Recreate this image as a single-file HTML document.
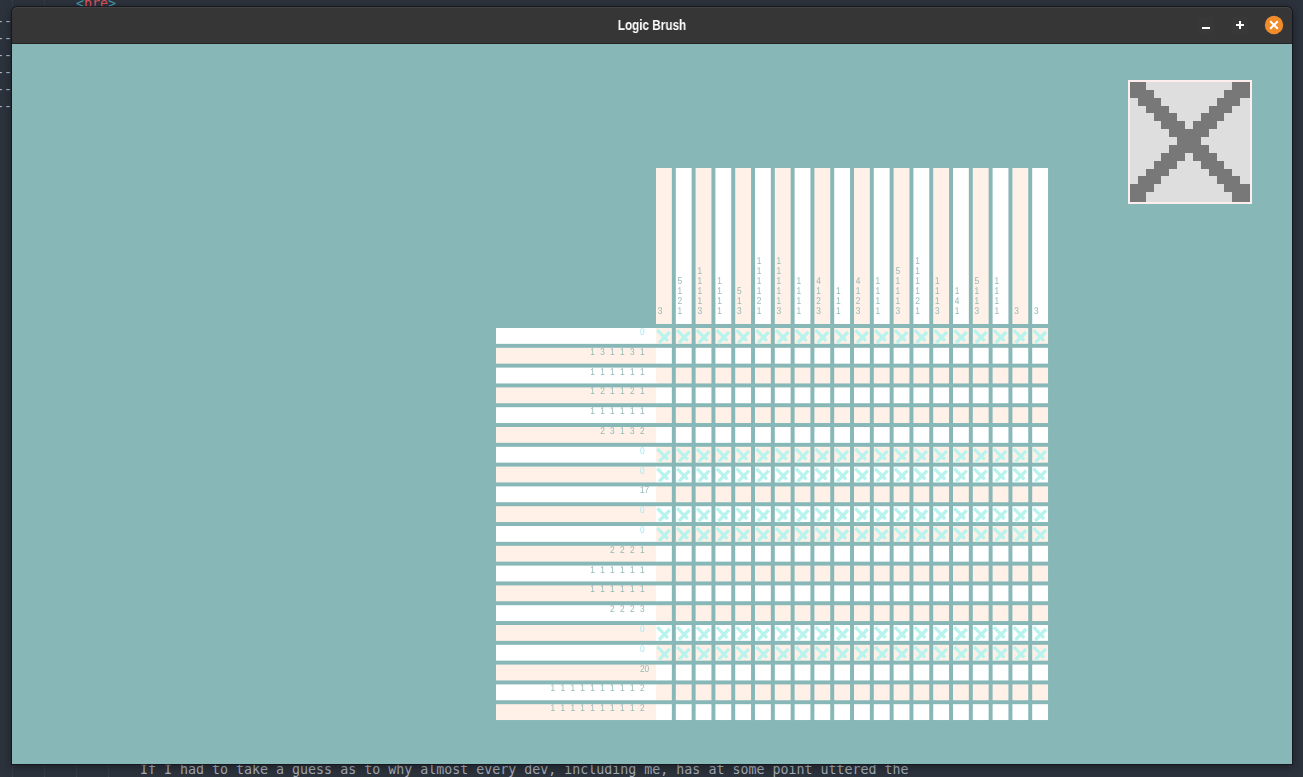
<!DOCTYPE html>
<html lang="en">
<head>
<meta charset="utf-8">
<title>Logic Brush</title>
<style>
html,body{margin:0;padding:0;}
body{width:1303px;height:777px;overflow:hidden;position:relative;background:#2d333d;font-family:"Liberation Sans",Arial,sans-serif;}
.editor{position:absolute;left:0;top:0;width:1303px;height:777px;overflow:hidden;font-family:"DejaVu Sans Mono","Liberation Mono",monospace;font-size:13.3px;color:#abb2bf;white-space:pre;}
.editor .ln{position:absolute;left:0;height:17px;line-height:17px;}
.guide{position:absolute;top:0;width:0;height:777px;border-left:1px dotted #3d4350;}
.win{position:absolute;left:12px;top:7px;width:1280px;height:757px;border-radius:5px 5px 0 0;background:#363636;box-shadow:0 0 0 1px rgba(18,20,26,.8),0 2px 11px 1px rgba(0,0,0,.4);overflow:hidden;}
.bar{position:absolute;left:0;top:0;width:1280px;height:36px;background:#363636;border-bottom:1px solid #242424;box-shadow:inset 0 1px 0 rgba(255,255,255,.07);border-radius:5px 5px 0 0;}
.title{position:absolute;left:0;top:1px;width:1280px;height:36px;line-height:36px;text-align:center;color:#fff;font-weight:bold;font-size:13.8px;transform:scaleX(.85);will-change:transform;}
.btn{position:absolute;top:0;}
.close{position:absolute;left:1253px;top:9px;width:18px;height:18px;border-radius:50%;background:#f08c2b;}
.content{position:absolute;left:0;top:37px;width:1280px;height:720px;background:#87b8b7;}
.grid{position:absolute;left:0;top:37px;will-change:transform;}
</style>
</head>
<body>
<div class="editor">
<div class="guide" style="left:12px"></div>
<div class="guide" style="left:44px"></div>
<div class="guide" style="left:76px;top:760px"></div>
<div class="guide" style="left:108px;top:760px"></div>
<div class="ln" style="left:76px;top:-5px"><span style="color:#46a5b3">&lt;</span><span style="color:#e0565f">pre</span><span style="color:#46a5b3">&gt;</span></div>
<div class="ln" style="left:-4px;top:13px;color:#b4bac6">--</div>
<div class="ln" style="left:-4px;top:30px;color:#b4bac6">--</div>
<div class="ln" style="left:-4px;top:47px;color:#b4bac6">--</div>
<div class="ln" style="left:-4px;top:64px;color:#b4bac6">--</div>
<div class="ln" style="left:-4px;top:81px;color:#b4bac6">--</div>
<div class="ln" style="left:-4px;top:98px;color:#b4bac6">--</div>
<div class="ln" style="left:140px;top:761px">If I had to take a guess as to why almost every dev, including me, has at some point uttered the</div>
</div>
<div class="win">
<div class="content"></div>
<div class="bar"></div>
<div class="title">Logic Brush</div>
<svg class="btn" style="left:0" width="1280" height="36" viewBox="0 0 1280 36">
<rect x="1186" y="10" width="16" height="16" fill="#fff" fill-opacity=".012"/><rect x="1220" y="10" width="16" height="16" fill="#fff" fill-opacity=".012"/>
<rect x="1190" y="20" width="8" height="2" fill="#fff"/>
<rect x="1224" y="17" width="8" height="2" fill="#fff"/><rect x="1227" y="14" width="2" height="8" fill="#fff"/>
<circle cx="1262" cy="18" r="9.2" fill="#f08c2b"/>
<path d="M1258.2 14.2l7.6 7.6M1265.8 14.2l-7.6 7.6" stroke="#fff" stroke-width="2" fill="none"/>
</svg>
<svg class="grid" width="1280" height="720" viewBox="12 44 1280 720">
<defs><g id="x" fill="none" stroke="#b9f3ed" stroke-width="3"><path stroke-width="3.3" d="M1.3 2.1L11.9 12.8"/><path stroke-width="3.4" d="M13.75 4.05L3.1 14.8"/><path stroke-width="1.6" d="M3.9 14.6L4.2 16.1"/></g></defs>
<rect x="656" y="168" width="15.84" height="156" fill="#fff1e8"/>
<rect x="675.8" y="168" width="15.84" height="156" fill="#ffffff"/>
<rect x="695.6" y="168" width="15.84" height="156" fill="#fff1e8"/>
<rect x="715.4" y="168" width="15.84" height="156" fill="#ffffff"/>
<rect x="735.2" y="168" width="15.84" height="156" fill="#fff1e8"/>
<rect x="755" y="168" width="15.84" height="156" fill="#ffffff"/>
<rect x="774.8" y="168" width="15.84" height="156" fill="#fff1e8"/>
<rect x="794.6" y="168" width="15.84" height="156" fill="#ffffff"/>
<rect x="814.4" y="168" width="15.84" height="156" fill="#fff1e8"/>
<rect x="834.2" y="168" width="15.84" height="156" fill="#ffffff"/>
<rect x="854" y="168" width="15.84" height="156" fill="#fff1e8"/>
<rect x="873.8" y="168" width="15.84" height="156" fill="#ffffff"/>
<rect x="893.6" y="168" width="15.84" height="156" fill="#fff1e8"/>
<rect x="913.4" y="168" width="15.84" height="156" fill="#ffffff"/>
<rect x="933.2" y="168" width="15.84" height="156" fill="#fff1e8"/>
<rect x="953" y="168" width="15.84" height="156" fill="#ffffff"/>
<rect x="972.8" y="168" width="15.84" height="156" fill="#fff1e8"/>
<rect x="992.6" y="168" width="15.84" height="156" fill="#ffffff"/>
<rect x="1012.4" y="168" width="15.84" height="156" fill="#fff1e8"/>
<rect x="1032.2" y="168" width="15.84" height="156" fill="#ffffff"/>
<rect x="496" y="328" width="160.5" height="15.84" fill="#ffffff"/>
<rect x="496" y="347.8" width="160.5" height="15.84" fill="#fff1e8"/>
<rect x="496" y="367.6" width="160.5" height="15.84" fill="#ffffff"/>
<rect x="496" y="387.4" width="160.5" height="15.84" fill="#fff1e8"/>
<rect x="496" y="407.2" width="160.5" height="15.84" fill="#ffffff"/>
<rect x="496" y="427" width="160.5" height="15.84" fill="#fff1e8"/>
<rect x="496" y="446.8" width="160.5" height="15.84" fill="#ffffff"/>
<rect x="496" y="466.6" width="160.5" height="15.84" fill="#fff1e8"/>
<rect x="496" y="486.4" width="160.5" height="15.84" fill="#ffffff"/>
<rect x="496" y="506.2" width="160.5" height="15.84" fill="#fff1e8"/>
<rect x="496" y="526" width="160.5" height="15.84" fill="#ffffff"/>
<rect x="496" y="545.8" width="160.5" height="15.84" fill="#fff1e8"/>
<rect x="496" y="565.6" width="160.5" height="15.84" fill="#ffffff"/>
<rect x="496" y="585.4" width="160.5" height="15.84" fill="#fff1e8"/>
<rect x="496" y="605.2" width="160.5" height="15.84" fill="#ffffff"/>
<rect x="496" y="625" width="160.5" height="15.84" fill="#fff1e8"/>
<rect x="496" y="644.8" width="160.5" height="15.84" fill="#ffffff"/>
<rect x="496" y="664.6" width="160.5" height="15.84" fill="#fff1e8"/>
<rect x="496" y="684.4" width="160.5" height="15.84" fill="#ffffff"/>
<rect x="496" y="704.2" width="160.5" height="15.84" fill="#fff1e8"/>
<rect x="656" y="328" width="15.84" height="15.84" fill="#fff1e8"/>
<rect x="675.8" y="328" width="15.84" height="15.84" fill="#fff1e8"/>
<rect x="695.6" y="328" width="15.84" height="15.84" fill="#fff1e8"/>
<rect x="715.4" y="328" width="15.84" height="15.84" fill="#fff1e8"/>
<rect x="735.2" y="328" width="15.84" height="15.84" fill="#fff1e8"/>
<rect x="755" y="328" width="15.84" height="15.84" fill="#fff1e8"/>
<rect x="774.8" y="328" width="15.84" height="15.84" fill="#fff1e8"/>
<rect x="794.6" y="328" width="15.84" height="15.84" fill="#fff1e8"/>
<rect x="814.4" y="328" width="15.84" height="15.84" fill="#fff1e8"/>
<rect x="834.2" y="328" width="15.84" height="15.84" fill="#fff1e8"/>
<rect x="854" y="328" width="15.84" height="15.84" fill="#fff1e8"/>
<rect x="873.8" y="328" width="15.84" height="15.84" fill="#fff1e8"/>
<rect x="893.6" y="328" width="15.84" height="15.84" fill="#fff1e8"/>
<rect x="913.4" y="328" width="15.84" height="15.84" fill="#fff1e8"/>
<rect x="933.2" y="328" width="15.84" height="15.84" fill="#fff1e8"/>
<rect x="953" y="328" width="15.84" height="15.84" fill="#fff1e8"/>
<rect x="972.8" y="328" width="15.84" height="15.84" fill="#fff1e8"/>
<rect x="992.6" y="328" width="15.84" height="15.84" fill="#fff1e8"/>
<rect x="1012.4" y="328" width="15.84" height="15.84" fill="#fff1e8"/>
<rect x="1032.2" y="328" width="15.84" height="15.84" fill="#fff1e8"/>
<use href="#x" x="656" y="328"/>
<use href="#x" x="675.8" y="328"/>
<use href="#x" x="695.6" y="328"/>
<use href="#x" x="715.4" y="328"/>
<use href="#x" x="735.2" y="328"/>
<use href="#x" x="755" y="328"/>
<use href="#x" x="774.8" y="328"/>
<use href="#x" x="794.6" y="328"/>
<use href="#x" x="814.4" y="328"/>
<use href="#x" x="834.2" y="328"/>
<use href="#x" x="854" y="328"/>
<use href="#x" x="873.8" y="328"/>
<use href="#x" x="893.6" y="328"/>
<use href="#x" x="913.4" y="328"/>
<use href="#x" x="933.2" y="328"/>
<use href="#x" x="953" y="328"/>
<use href="#x" x="972.8" y="328"/>
<use href="#x" x="992.6" y="328"/>
<use href="#x" x="1012.4" y="328"/>
<use href="#x" x="1032.2" y="328"/>
<rect x="656" y="347.8" width="15.84" height="15.84" fill="#ffffff"/>
<rect x="675.8" y="347.8" width="15.84" height="15.84" fill="#ffffff"/>
<rect x="695.6" y="347.8" width="15.84" height="15.84" fill="#ffffff"/>
<rect x="715.4" y="347.8" width="15.84" height="15.84" fill="#ffffff"/>
<rect x="735.2" y="347.8" width="15.84" height="15.84" fill="#ffffff"/>
<rect x="755" y="347.8" width="15.84" height="15.84" fill="#ffffff"/>
<rect x="774.8" y="347.8" width="15.84" height="15.84" fill="#ffffff"/>
<rect x="794.6" y="347.8" width="15.84" height="15.84" fill="#ffffff"/>
<rect x="814.4" y="347.8" width="15.84" height="15.84" fill="#ffffff"/>
<rect x="834.2" y="347.8" width="15.84" height="15.84" fill="#ffffff"/>
<rect x="854" y="347.8" width="15.84" height="15.84" fill="#ffffff"/>
<rect x="873.8" y="347.8" width="15.84" height="15.84" fill="#ffffff"/>
<rect x="893.6" y="347.8" width="15.84" height="15.84" fill="#ffffff"/>
<rect x="913.4" y="347.8" width="15.84" height="15.84" fill="#ffffff"/>
<rect x="933.2" y="347.8" width="15.84" height="15.84" fill="#ffffff"/>
<rect x="953" y="347.8" width="15.84" height="15.84" fill="#ffffff"/>
<rect x="972.8" y="347.8" width="15.84" height="15.84" fill="#ffffff"/>
<rect x="992.6" y="347.8" width="15.84" height="15.84" fill="#ffffff"/>
<rect x="1012.4" y="347.8" width="15.84" height="15.84" fill="#ffffff"/>
<rect x="1032.2" y="347.8" width="15.84" height="15.84" fill="#ffffff"/>
<rect x="656" y="367.6" width="15.84" height="15.84" fill="#fff1e8"/>
<rect x="675.8" y="367.6" width="15.84" height="15.84" fill="#fff1e8"/>
<rect x="695.6" y="367.6" width="15.84" height="15.84" fill="#fff1e8"/>
<rect x="715.4" y="367.6" width="15.84" height="15.84" fill="#fff1e8"/>
<rect x="735.2" y="367.6" width="15.84" height="15.84" fill="#fff1e8"/>
<rect x="755" y="367.6" width="15.84" height="15.84" fill="#fff1e8"/>
<rect x="774.8" y="367.6" width="15.84" height="15.84" fill="#fff1e8"/>
<rect x="794.6" y="367.6" width="15.84" height="15.84" fill="#fff1e8"/>
<rect x="814.4" y="367.6" width="15.84" height="15.84" fill="#fff1e8"/>
<rect x="834.2" y="367.6" width="15.84" height="15.84" fill="#fff1e8"/>
<rect x="854" y="367.6" width="15.84" height="15.84" fill="#fff1e8"/>
<rect x="873.8" y="367.6" width="15.84" height="15.84" fill="#fff1e8"/>
<rect x="893.6" y="367.6" width="15.84" height="15.84" fill="#fff1e8"/>
<rect x="913.4" y="367.6" width="15.84" height="15.84" fill="#fff1e8"/>
<rect x="933.2" y="367.6" width="15.84" height="15.84" fill="#fff1e8"/>
<rect x="953" y="367.6" width="15.84" height="15.84" fill="#fff1e8"/>
<rect x="972.8" y="367.6" width="15.84" height="15.84" fill="#fff1e8"/>
<rect x="992.6" y="367.6" width="15.84" height="15.84" fill="#fff1e8"/>
<rect x="1012.4" y="367.6" width="15.84" height="15.84" fill="#fff1e8"/>
<rect x="1032.2" y="367.6" width="15.84" height="15.84" fill="#fff1e8"/>
<rect x="656" y="387.4" width="15.84" height="15.84" fill="#ffffff"/>
<rect x="675.8" y="387.4" width="15.84" height="15.84" fill="#ffffff"/>
<rect x="695.6" y="387.4" width="15.84" height="15.84" fill="#ffffff"/>
<rect x="715.4" y="387.4" width="15.84" height="15.84" fill="#ffffff"/>
<rect x="735.2" y="387.4" width="15.84" height="15.84" fill="#ffffff"/>
<rect x="755" y="387.4" width="15.84" height="15.84" fill="#ffffff"/>
<rect x="774.8" y="387.4" width="15.84" height="15.84" fill="#ffffff"/>
<rect x="794.6" y="387.4" width="15.84" height="15.84" fill="#ffffff"/>
<rect x="814.4" y="387.4" width="15.84" height="15.84" fill="#ffffff"/>
<rect x="834.2" y="387.4" width="15.84" height="15.84" fill="#ffffff"/>
<rect x="854" y="387.4" width="15.84" height="15.84" fill="#ffffff"/>
<rect x="873.8" y="387.4" width="15.84" height="15.84" fill="#ffffff"/>
<rect x="893.6" y="387.4" width="15.84" height="15.84" fill="#ffffff"/>
<rect x="913.4" y="387.4" width="15.84" height="15.84" fill="#ffffff"/>
<rect x="933.2" y="387.4" width="15.84" height="15.84" fill="#ffffff"/>
<rect x="953" y="387.4" width="15.84" height="15.84" fill="#ffffff"/>
<rect x="972.8" y="387.4" width="15.84" height="15.84" fill="#ffffff"/>
<rect x="992.6" y="387.4" width="15.84" height="15.84" fill="#ffffff"/>
<rect x="1012.4" y="387.4" width="15.84" height="15.84" fill="#ffffff"/>
<rect x="1032.2" y="387.4" width="15.84" height="15.84" fill="#ffffff"/>
<rect x="656" y="407.2" width="15.84" height="15.84" fill="#fff1e8"/>
<rect x="675.8" y="407.2" width="15.84" height="15.84" fill="#fff1e8"/>
<rect x="695.6" y="407.2" width="15.84" height="15.84" fill="#fff1e8"/>
<rect x="715.4" y="407.2" width="15.84" height="15.84" fill="#fff1e8"/>
<rect x="735.2" y="407.2" width="15.84" height="15.84" fill="#fff1e8"/>
<rect x="755" y="407.2" width="15.84" height="15.84" fill="#fff1e8"/>
<rect x="774.8" y="407.2" width="15.84" height="15.84" fill="#fff1e8"/>
<rect x="794.6" y="407.2" width="15.84" height="15.84" fill="#fff1e8"/>
<rect x="814.4" y="407.2" width="15.84" height="15.84" fill="#fff1e8"/>
<rect x="834.2" y="407.2" width="15.84" height="15.84" fill="#fff1e8"/>
<rect x="854" y="407.2" width="15.84" height="15.84" fill="#fff1e8"/>
<rect x="873.8" y="407.2" width="15.84" height="15.84" fill="#fff1e8"/>
<rect x="893.6" y="407.2" width="15.84" height="15.84" fill="#fff1e8"/>
<rect x="913.4" y="407.2" width="15.84" height="15.84" fill="#fff1e8"/>
<rect x="933.2" y="407.2" width="15.84" height="15.84" fill="#fff1e8"/>
<rect x="953" y="407.2" width="15.84" height="15.84" fill="#fff1e8"/>
<rect x="972.8" y="407.2" width="15.84" height="15.84" fill="#fff1e8"/>
<rect x="992.6" y="407.2" width="15.84" height="15.84" fill="#fff1e8"/>
<rect x="1012.4" y="407.2" width="15.84" height="15.84" fill="#fff1e8"/>
<rect x="1032.2" y="407.2" width="15.84" height="15.84" fill="#fff1e8"/>
<rect x="656" y="427" width="15.84" height="15.84" fill="#ffffff"/>
<rect x="675.8" y="427" width="15.84" height="15.84" fill="#ffffff"/>
<rect x="695.6" y="427" width="15.84" height="15.84" fill="#ffffff"/>
<rect x="715.4" y="427" width="15.84" height="15.84" fill="#ffffff"/>
<rect x="735.2" y="427" width="15.84" height="15.84" fill="#ffffff"/>
<rect x="755" y="427" width="15.84" height="15.84" fill="#ffffff"/>
<rect x="774.8" y="427" width="15.84" height="15.84" fill="#ffffff"/>
<rect x="794.6" y="427" width="15.84" height="15.84" fill="#ffffff"/>
<rect x="814.4" y="427" width="15.84" height="15.84" fill="#ffffff"/>
<rect x="834.2" y="427" width="15.84" height="15.84" fill="#ffffff"/>
<rect x="854" y="427" width="15.84" height="15.84" fill="#ffffff"/>
<rect x="873.8" y="427" width="15.84" height="15.84" fill="#ffffff"/>
<rect x="893.6" y="427" width="15.84" height="15.84" fill="#ffffff"/>
<rect x="913.4" y="427" width="15.84" height="15.84" fill="#ffffff"/>
<rect x="933.2" y="427" width="15.84" height="15.84" fill="#ffffff"/>
<rect x="953" y="427" width="15.84" height="15.84" fill="#ffffff"/>
<rect x="972.8" y="427" width="15.84" height="15.84" fill="#ffffff"/>
<rect x="992.6" y="427" width="15.84" height="15.84" fill="#ffffff"/>
<rect x="1012.4" y="427" width="15.84" height="15.84" fill="#ffffff"/>
<rect x="1032.2" y="427" width="15.84" height="15.84" fill="#ffffff"/>
<rect x="656" y="446.8" width="15.84" height="15.84" fill="#fff1e8"/>
<rect x="675.8" y="446.8" width="15.84" height="15.84" fill="#fff1e8"/>
<rect x="695.6" y="446.8" width="15.84" height="15.84" fill="#fff1e8"/>
<rect x="715.4" y="446.8" width="15.84" height="15.84" fill="#fff1e8"/>
<rect x="735.2" y="446.8" width="15.84" height="15.84" fill="#fff1e8"/>
<rect x="755" y="446.8" width="15.84" height="15.84" fill="#fff1e8"/>
<rect x="774.8" y="446.8" width="15.84" height="15.84" fill="#fff1e8"/>
<rect x="794.6" y="446.8" width="15.84" height="15.84" fill="#fff1e8"/>
<rect x="814.4" y="446.8" width="15.84" height="15.84" fill="#fff1e8"/>
<rect x="834.2" y="446.8" width="15.84" height="15.84" fill="#fff1e8"/>
<rect x="854" y="446.8" width="15.84" height="15.84" fill="#fff1e8"/>
<rect x="873.8" y="446.8" width="15.84" height="15.84" fill="#fff1e8"/>
<rect x="893.6" y="446.8" width="15.84" height="15.84" fill="#fff1e8"/>
<rect x="913.4" y="446.8" width="15.84" height="15.84" fill="#fff1e8"/>
<rect x="933.2" y="446.8" width="15.84" height="15.84" fill="#fff1e8"/>
<rect x="953" y="446.8" width="15.84" height="15.84" fill="#fff1e8"/>
<rect x="972.8" y="446.8" width="15.84" height="15.84" fill="#fff1e8"/>
<rect x="992.6" y="446.8" width="15.84" height="15.84" fill="#fff1e8"/>
<rect x="1012.4" y="446.8" width="15.84" height="15.84" fill="#fff1e8"/>
<rect x="1032.2" y="446.8" width="15.84" height="15.84" fill="#fff1e8"/>
<use href="#x" x="656" y="446.8"/>
<use href="#x" x="675.8" y="446.8"/>
<use href="#x" x="695.6" y="446.8"/>
<use href="#x" x="715.4" y="446.8"/>
<use href="#x" x="735.2" y="446.8"/>
<use href="#x" x="755" y="446.8"/>
<use href="#x" x="774.8" y="446.8"/>
<use href="#x" x="794.6" y="446.8"/>
<use href="#x" x="814.4" y="446.8"/>
<use href="#x" x="834.2" y="446.8"/>
<use href="#x" x="854" y="446.8"/>
<use href="#x" x="873.8" y="446.8"/>
<use href="#x" x="893.6" y="446.8"/>
<use href="#x" x="913.4" y="446.8"/>
<use href="#x" x="933.2" y="446.8"/>
<use href="#x" x="953" y="446.8"/>
<use href="#x" x="972.8" y="446.8"/>
<use href="#x" x="992.6" y="446.8"/>
<use href="#x" x="1012.4" y="446.8"/>
<use href="#x" x="1032.2" y="446.8"/>
<rect x="656" y="466.6" width="15.84" height="15.84" fill="#ffffff"/>
<rect x="675.8" y="466.6" width="15.84" height="15.84" fill="#ffffff"/>
<rect x="695.6" y="466.6" width="15.84" height="15.84" fill="#ffffff"/>
<rect x="715.4" y="466.6" width="15.84" height="15.84" fill="#ffffff"/>
<rect x="735.2" y="466.6" width="15.84" height="15.84" fill="#ffffff"/>
<rect x="755" y="466.6" width="15.84" height="15.84" fill="#ffffff"/>
<rect x="774.8" y="466.6" width="15.84" height="15.84" fill="#ffffff"/>
<rect x="794.6" y="466.6" width="15.84" height="15.84" fill="#ffffff"/>
<rect x="814.4" y="466.6" width="15.84" height="15.84" fill="#ffffff"/>
<rect x="834.2" y="466.6" width="15.84" height="15.84" fill="#ffffff"/>
<rect x="854" y="466.6" width="15.84" height="15.84" fill="#ffffff"/>
<rect x="873.8" y="466.6" width="15.84" height="15.84" fill="#ffffff"/>
<rect x="893.6" y="466.6" width="15.84" height="15.84" fill="#ffffff"/>
<rect x="913.4" y="466.6" width="15.84" height="15.84" fill="#ffffff"/>
<rect x="933.2" y="466.6" width="15.84" height="15.84" fill="#ffffff"/>
<rect x="953" y="466.6" width="15.84" height="15.84" fill="#ffffff"/>
<rect x="972.8" y="466.6" width="15.84" height="15.84" fill="#ffffff"/>
<rect x="992.6" y="466.6" width="15.84" height="15.84" fill="#ffffff"/>
<rect x="1012.4" y="466.6" width="15.84" height="15.84" fill="#ffffff"/>
<rect x="1032.2" y="466.6" width="15.84" height="15.84" fill="#ffffff"/>
<use href="#x" x="656" y="466.6"/>
<use href="#x" x="675.8" y="466.6"/>
<use href="#x" x="695.6" y="466.6"/>
<use href="#x" x="715.4" y="466.6"/>
<use href="#x" x="735.2" y="466.6"/>
<use href="#x" x="755" y="466.6"/>
<use href="#x" x="774.8" y="466.6"/>
<use href="#x" x="794.6" y="466.6"/>
<use href="#x" x="814.4" y="466.6"/>
<use href="#x" x="834.2" y="466.6"/>
<use href="#x" x="854" y="466.6"/>
<use href="#x" x="873.8" y="466.6"/>
<use href="#x" x="893.6" y="466.6"/>
<use href="#x" x="913.4" y="466.6"/>
<use href="#x" x="933.2" y="466.6"/>
<use href="#x" x="953" y="466.6"/>
<use href="#x" x="972.8" y="466.6"/>
<use href="#x" x="992.6" y="466.6"/>
<use href="#x" x="1012.4" y="466.6"/>
<use href="#x" x="1032.2" y="466.6"/>
<rect x="656" y="486.4" width="15.84" height="15.84" fill="#fff1e8"/>
<rect x="675.8" y="486.4" width="15.84" height="15.84" fill="#fff1e8"/>
<rect x="695.6" y="486.4" width="15.84" height="15.84" fill="#fff1e8"/>
<rect x="715.4" y="486.4" width="15.84" height="15.84" fill="#fff1e8"/>
<rect x="735.2" y="486.4" width="15.84" height="15.84" fill="#fff1e8"/>
<rect x="755" y="486.4" width="15.84" height="15.84" fill="#fff1e8"/>
<rect x="774.8" y="486.4" width="15.84" height="15.84" fill="#fff1e8"/>
<rect x="794.6" y="486.4" width="15.84" height="15.84" fill="#fff1e8"/>
<rect x="814.4" y="486.4" width="15.84" height="15.84" fill="#fff1e8"/>
<rect x="834.2" y="486.4" width="15.84" height="15.84" fill="#fff1e8"/>
<rect x="854" y="486.4" width="15.84" height="15.84" fill="#fff1e8"/>
<rect x="873.8" y="486.4" width="15.84" height="15.84" fill="#fff1e8"/>
<rect x="893.6" y="486.4" width="15.84" height="15.84" fill="#fff1e8"/>
<rect x="913.4" y="486.4" width="15.84" height="15.84" fill="#fff1e8"/>
<rect x="933.2" y="486.4" width="15.84" height="15.84" fill="#fff1e8"/>
<rect x="953" y="486.4" width="15.84" height="15.84" fill="#fff1e8"/>
<rect x="972.8" y="486.4" width="15.84" height="15.84" fill="#fff1e8"/>
<rect x="992.6" y="486.4" width="15.84" height="15.84" fill="#fff1e8"/>
<rect x="1012.4" y="486.4" width="15.84" height="15.84" fill="#fff1e8"/>
<rect x="1032.2" y="486.4" width="15.84" height="15.84" fill="#fff1e8"/>
<rect x="656" y="506.2" width="15.84" height="15.84" fill="#ffffff"/>
<rect x="675.8" y="506.2" width="15.84" height="15.84" fill="#ffffff"/>
<rect x="695.6" y="506.2" width="15.84" height="15.84" fill="#ffffff"/>
<rect x="715.4" y="506.2" width="15.84" height="15.84" fill="#ffffff"/>
<rect x="735.2" y="506.2" width="15.84" height="15.84" fill="#ffffff"/>
<rect x="755" y="506.2" width="15.84" height="15.84" fill="#ffffff"/>
<rect x="774.8" y="506.2" width="15.84" height="15.84" fill="#ffffff"/>
<rect x="794.6" y="506.2" width="15.84" height="15.84" fill="#ffffff"/>
<rect x="814.4" y="506.2" width="15.84" height="15.84" fill="#ffffff"/>
<rect x="834.2" y="506.2" width="15.84" height="15.84" fill="#ffffff"/>
<rect x="854" y="506.2" width="15.84" height="15.84" fill="#ffffff"/>
<rect x="873.8" y="506.2" width="15.84" height="15.84" fill="#ffffff"/>
<rect x="893.6" y="506.2" width="15.84" height="15.84" fill="#ffffff"/>
<rect x="913.4" y="506.2" width="15.84" height="15.84" fill="#ffffff"/>
<rect x="933.2" y="506.2" width="15.84" height="15.84" fill="#ffffff"/>
<rect x="953" y="506.2" width="15.84" height="15.84" fill="#ffffff"/>
<rect x="972.8" y="506.2" width="15.84" height="15.84" fill="#ffffff"/>
<rect x="992.6" y="506.2" width="15.84" height="15.84" fill="#ffffff"/>
<rect x="1012.4" y="506.2" width="15.84" height="15.84" fill="#ffffff"/>
<rect x="1032.2" y="506.2" width="15.84" height="15.84" fill="#ffffff"/>
<use href="#x" x="656" y="506.2"/>
<use href="#x" x="675.8" y="506.2"/>
<use href="#x" x="695.6" y="506.2"/>
<use href="#x" x="715.4" y="506.2"/>
<use href="#x" x="735.2" y="506.2"/>
<use href="#x" x="755" y="506.2"/>
<use href="#x" x="774.8" y="506.2"/>
<use href="#x" x="794.6" y="506.2"/>
<use href="#x" x="814.4" y="506.2"/>
<use href="#x" x="834.2" y="506.2"/>
<use href="#x" x="854" y="506.2"/>
<use href="#x" x="873.8" y="506.2"/>
<use href="#x" x="893.6" y="506.2"/>
<use href="#x" x="913.4" y="506.2"/>
<use href="#x" x="933.2" y="506.2"/>
<use href="#x" x="953" y="506.2"/>
<use href="#x" x="972.8" y="506.2"/>
<use href="#x" x="992.6" y="506.2"/>
<use href="#x" x="1012.4" y="506.2"/>
<use href="#x" x="1032.2" y="506.2"/>
<rect x="656" y="526" width="15.84" height="15.84" fill="#fff1e8"/>
<rect x="675.8" y="526" width="15.84" height="15.84" fill="#fff1e8"/>
<rect x="695.6" y="526" width="15.84" height="15.84" fill="#fff1e8"/>
<rect x="715.4" y="526" width="15.84" height="15.84" fill="#fff1e8"/>
<rect x="735.2" y="526" width="15.84" height="15.84" fill="#fff1e8"/>
<rect x="755" y="526" width="15.84" height="15.84" fill="#fff1e8"/>
<rect x="774.8" y="526" width="15.84" height="15.84" fill="#fff1e8"/>
<rect x="794.6" y="526" width="15.84" height="15.84" fill="#fff1e8"/>
<rect x="814.4" y="526" width="15.84" height="15.84" fill="#fff1e8"/>
<rect x="834.2" y="526" width="15.84" height="15.84" fill="#fff1e8"/>
<rect x="854" y="526" width="15.84" height="15.84" fill="#fff1e8"/>
<rect x="873.8" y="526" width="15.84" height="15.84" fill="#fff1e8"/>
<rect x="893.6" y="526" width="15.84" height="15.84" fill="#fff1e8"/>
<rect x="913.4" y="526" width="15.84" height="15.84" fill="#fff1e8"/>
<rect x="933.2" y="526" width="15.84" height="15.84" fill="#fff1e8"/>
<rect x="953" y="526" width="15.84" height="15.84" fill="#fff1e8"/>
<rect x="972.8" y="526" width="15.84" height="15.84" fill="#fff1e8"/>
<rect x="992.6" y="526" width="15.84" height="15.84" fill="#fff1e8"/>
<rect x="1012.4" y="526" width="15.84" height="15.84" fill="#fff1e8"/>
<rect x="1032.2" y="526" width="15.84" height="15.84" fill="#fff1e8"/>
<use href="#x" x="656" y="526"/>
<use href="#x" x="675.8" y="526"/>
<use href="#x" x="695.6" y="526"/>
<use href="#x" x="715.4" y="526"/>
<use href="#x" x="735.2" y="526"/>
<use href="#x" x="755" y="526"/>
<use href="#x" x="774.8" y="526"/>
<use href="#x" x="794.6" y="526"/>
<use href="#x" x="814.4" y="526"/>
<use href="#x" x="834.2" y="526"/>
<use href="#x" x="854" y="526"/>
<use href="#x" x="873.8" y="526"/>
<use href="#x" x="893.6" y="526"/>
<use href="#x" x="913.4" y="526"/>
<use href="#x" x="933.2" y="526"/>
<use href="#x" x="953" y="526"/>
<use href="#x" x="972.8" y="526"/>
<use href="#x" x="992.6" y="526"/>
<use href="#x" x="1012.4" y="526"/>
<use href="#x" x="1032.2" y="526"/>
<rect x="656" y="545.8" width="15.84" height="15.84" fill="#ffffff"/>
<rect x="675.8" y="545.8" width="15.84" height="15.84" fill="#ffffff"/>
<rect x="695.6" y="545.8" width="15.84" height="15.84" fill="#ffffff"/>
<rect x="715.4" y="545.8" width="15.84" height="15.84" fill="#ffffff"/>
<rect x="735.2" y="545.8" width="15.84" height="15.84" fill="#ffffff"/>
<rect x="755" y="545.8" width="15.84" height="15.84" fill="#ffffff"/>
<rect x="774.8" y="545.8" width="15.84" height="15.84" fill="#ffffff"/>
<rect x="794.6" y="545.8" width="15.84" height="15.84" fill="#ffffff"/>
<rect x="814.4" y="545.8" width="15.84" height="15.84" fill="#ffffff"/>
<rect x="834.2" y="545.8" width="15.84" height="15.84" fill="#ffffff"/>
<rect x="854" y="545.8" width="15.84" height="15.84" fill="#ffffff"/>
<rect x="873.8" y="545.8" width="15.84" height="15.84" fill="#ffffff"/>
<rect x="893.6" y="545.8" width="15.84" height="15.84" fill="#ffffff"/>
<rect x="913.4" y="545.8" width="15.84" height="15.84" fill="#ffffff"/>
<rect x="933.2" y="545.8" width="15.84" height="15.84" fill="#ffffff"/>
<rect x="953" y="545.8" width="15.84" height="15.84" fill="#ffffff"/>
<rect x="972.8" y="545.8" width="15.84" height="15.84" fill="#ffffff"/>
<rect x="992.6" y="545.8" width="15.84" height="15.84" fill="#ffffff"/>
<rect x="1012.4" y="545.8" width="15.84" height="15.84" fill="#ffffff"/>
<rect x="1032.2" y="545.8" width="15.84" height="15.84" fill="#ffffff"/>
<rect x="656" y="565.6" width="15.84" height="15.84" fill="#fff1e8"/>
<rect x="675.8" y="565.6" width="15.84" height="15.84" fill="#fff1e8"/>
<rect x="695.6" y="565.6" width="15.84" height="15.84" fill="#fff1e8"/>
<rect x="715.4" y="565.6" width="15.84" height="15.84" fill="#fff1e8"/>
<rect x="735.2" y="565.6" width="15.84" height="15.84" fill="#fff1e8"/>
<rect x="755" y="565.6" width="15.84" height="15.84" fill="#fff1e8"/>
<rect x="774.8" y="565.6" width="15.84" height="15.84" fill="#fff1e8"/>
<rect x="794.6" y="565.6" width="15.84" height="15.84" fill="#fff1e8"/>
<rect x="814.4" y="565.6" width="15.84" height="15.84" fill="#fff1e8"/>
<rect x="834.2" y="565.6" width="15.84" height="15.84" fill="#fff1e8"/>
<rect x="854" y="565.6" width="15.84" height="15.84" fill="#fff1e8"/>
<rect x="873.8" y="565.6" width="15.84" height="15.84" fill="#fff1e8"/>
<rect x="893.6" y="565.6" width="15.84" height="15.84" fill="#fff1e8"/>
<rect x="913.4" y="565.6" width="15.84" height="15.84" fill="#fff1e8"/>
<rect x="933.2" y="565.6" width="15.84" height="15.84" fill="#fff1e8"/>
<rect x="953" y="565.6" width="15.84" height="15.84" fill="#fff1e8"/>
<rect x="972.8" y="565.6" width="15.84" height="15.84" fill="#fff1e8"/>
<rect x="992.6" y="565.6" width="15.84" height="15.84" fill="#fff1e8"/>
<rect x="1012.4" y="565.6" width="15.84" height="15.84" fill="#fff1e8"/>
<rect x="1032.2" y="565.6" width="15.84" height="15.84" fill="#fff1e8"/>
<rect x="656" y="585.4" width="15.84" height="15.84" fill="#ffffff"/>
<rect x="675.8" y="585.4" width="15.84" height="15.84" fill="#ffffff"/>
<rect x="695.6" y="585.4" width="15.84" height="15.84" fill="#ffffff"/>
<rect x="715.4" y="585.4" width="15.84" height="15.84" fill="#ffffff"/>
<rect x="735.2" y="585.4" width="15.84" height="15.84" fill="#ffffff"/>
<rect x="755" y="585.4" width="15.84" height="15.84" fill="#ffffff"/>
<rect x="774.8" y="585.4" width="15.84" height="15.84" fill="#ffffff"/>
<rect x="794.6" y="585.4" width="15.84" height="15.84" fill="#ffffff"/>
<rect x="814.4" y="585.4" width="15.84" height="15.84" fill="#ffffff"/>
<rect x="834.2" y="585.4" width="15.84" height="15.84" fill="#ffffff"/>
<rect x="854" y="585.4" width="15.84" height="15.84" fill="#ffffff"/>
<rect x="873.8" y="585.4" width="15.84" height="15.84" fill="#ffffff"/>
<rect x="893.6" y="585.4" width="15.84" height="15.84" fill="#ffffff"/>
<rect x="913.4" y="585.4" width="15.84" height="15.84" fill="#ffffff"/>
<rect x="933.2" y="585.4" width="15.84" height="15.84" fill="#ffffff"/>
<rect x="953" y="585.4" width="15.84" height="15.84" fill="#ffffff"/>
<rect x="972.8" y="585.4" width="15.84" height="15.84" fill="#ffffff"/>
<rect x="992.6" y="585.4" width="15.84" height="15.84" fill="#ffffff"/>
<rect x="1012.4" y="585.4" width="15.84" height="15.84" fill="#ffffff"/>
<rect x="1032.2" y="585.4" width="15.84" height="15.84" fill="#ffffff"/>
<rect x="656" y="605.2" width="15.84" height="15.84" fill="#fff1e8"/>
<rect x="675.8" y="605.2" width="15.84" height="15.84" fill="#fff1e8"/>
<rect x="695.6" y="605.2" width="15.84" height="15.84" fill="#fff1e8"/>
<rect x="715.4" y="605.2" width="15.84" height="15.84" fill="#fff1e8"/>
<rect x="735.2" y="605.2" width="15.84" height="15.84" fill="#fff1e8"/>
<rect x="755" y="605.2" width="15.84" height="15.84" fill="#fff1e8"/>
<rect x="774.8" y="605.2" width="15.84" height="15.84" fill="#fff1e8"/>
<rect x="794.6" y="605.2" width="15.84" height="15.84" fill="#fff1e8"/>
<rect x="814.4" y="605.2" width="15.84" height="15.84" fill="#fff1e8"/>
<rect x="834.2" y="605.2" width="15.84" height="15.84" fill="#fff1e8"/>
<rect x="854" y="605.2" width="15.84" height="15.84" fill="#fff1e8"/>
<rect x="873.8" y="605.2" width="15.84" height="15.84" fill="#fff1e8"/>
<rect x="893.6" y="605.2" width="15.84" height="15.84" fill="#fff1e8"/>
<rect x="913.4" y="605.2" width="15.84" height="15.84" fill="#fff1e8"/>
<rect x="933.2" y="605.2" width="15.84" height="15.84" fill="#fff1e8"/>
<rect x="953" y="605.2" width="15.84" height="15.84" fill="#fff1e8"/>
<rect x="972.8" y="605.2" width="15.84" height="15.84" fill="#fff1e8"/>
<rect x="992.6" y="605.2" width="15.84" height="15.84" fill="#fff1e8"/>
<rect x="1012.4" y="605.2" width="15.84" height="15.84" fill="#fff1e8"/>
<rect x="1032.2" y="605.2" width="15.84" height="15.84" fill="#fff1e8"/>
<rect x="656" y="625" width="15.84" height="15.84" fill="#ffffff"/>
<rect x="675.8" y="625" width="15.84" height="15.84" fill="#ffffff"/>
<rect x="695.6" y="625" width="15.84" height="15.84" fill="#ffffff"/>
<rect x="715.4" y="625" width="15.84" height="15.84" fill="#ffffff"/>
<rect x="735.2" y="625" width="15.84" height="15.84" fill="#ffffff"/>
<rect x="755" y="625" width="15.84" height="15.84" fill="#ffffff"/>
<rect x="774.8" y="625" width="15.84" height="15.84" fill="#ffffff"/>
<rect x="794.6" y="625" width="15.84" height="15.84" fill="#ffffff"/>
<rect x="814.4" y="625" width="15.84" height="15.84" fill="#ffffff"/>
<rect x="834.2" y="625" width="15.84" height="15.84" fill="#ffffff"/>
<rect x="854" y="625" width="15.84" height="15.84" fill="#ffffff"/>
<rect x="873.8" y="625" width="15.84" height="15.84" fill="#ffffff"/>
<rect x="893.6" y="625" width="15.84" height="15.84" fill="#ffffff"/>
<rect x="913.4" y="625" width="15.84" height="15.84" fill="#ffffff"/>
<rect x="933.2" y="625" width="15.84" height="15.84" fill="#ffffff"/>
<rect x="953" y="625" width="15.84" height="15.84" fill="#ffffff"/>
<rect x="972.8" y="625" width="15.84" height="15.84" fill="#ffffff"/>
<rect x="992.6" y="625" width="15.84" height="15.84" fill="#ffffff"/>
<rect x="1012.4" y="625" width="15.84" height="15.84" fill="#ffffff"/>
<rect x="1032.2" y="625" width="15.84" height="15.84" fill="#ffffff"/>
<use href="#x" x="656" y="625"/>
<use href="#x" x="675.8" y="625"/>
<use href="#x" x="695.6" y="625"/>
<use href="#x" x="715.4" y="625"/>
<use href="#x" x="735.2" y="625"/>
<use href="#x" x="755" y="625"/>
<use href="#x" x="774.8" y="625"/>
<use href="#x" x="794.6" y="625"/>
<use href="#x" x="814.4" y="625"/>
<use href="#x" x="834.2" y="625"/>
<use href="#x" x="854" y="625"/>
<use href="#x" x="873.8" y="625"/>
<use href="#x" x="893.6" y="625"/>
<use href="#x" x="913.4" y="625"/>
<use href="#x" x="933.2" y="625"/>
<use href="#x" x="953" y="625"/>
<use href="#x" x="972.8" y="625"/>
<use href="#x" x="992.6" y="625"/>
<use href="#x" x="1012.4" y="625"/>
<use href="#x" x="1032.2" y="625"/>
<rect x="656" y="644.8" width="15.84" height="15.84" fill="#fff1e8"/>
<rect x="675.8" y="644.8" width="15.84" height="15.84" fill="#fff1e8"/>
<rect x="695.6" y="644.8" width="15.84" height="15.84" fill="#fff1e8"/>
<rect x="715.4" y="644.8" width="15.84" height="15.84" fill="#fff1e8"/>
<rect x="735.2" y="644.8" width="15.84" height="15.84" fill="#fff1e8"/>
<rect x="755" y="644.8" width="15.84" height="15.84" fill="#fff1e8"/>
<rect x="774.8" y="644.8" width="15.84" height="15.84" fill="#fff1e8"/>
<rect x="794.6" y="644.8" width="15.84" height="15.84" fill="#fff1e8"/>
<rect x="814.4" y="644.8" width="15.84" height="15.84" fill="#fff1e8"/>
<rect x="834.2" y="644.8" width="15.84" height="15.84" fill="#fff1e8"/>
<rect x="854" y="644.8" width="15.84" height="15.84" fill="#fff1e8"/>
<rect x="873.8" y="644.8" width="15.84" height="15.84" fill="#fff1e8"/>
<rect x="893.6" y="644.8" width="15.84" height="15.84" fill="#fff1e8"/>
<rect x="913.4" y="644.8" width="15.84" height="15.84" fill="#fff1e8"/>
<rect x="933.2" y="644.8" width="15.84" height="15.84" fill="#fff1e8"/>
<rect x="953" y="644.8" width="15.84" height="15.84" fill="#fff1e8"/>
<rect x="972.8" y="644.8" width="15.84" height="15.84" fill="#fff1e8"/>
<rect x="992.6" y="644.8" width="15.84" height="15.84" fill="#fff1e8"/>
<rect x="1012.4" y="644.8" width="15.84" height="15.84" fill="#fff1e8"/>
<rect x="1032.2" y="644.8" width="15.84" height="15.84" fill="#fff1e8"/>
<use href="#x" x="656" y="644.8"/>
<use href="#x" x="675.8" y="644.8"/>
<use href="#x" x="695.6" y="644.8"/>
<use href="#x" x="715.4" y="644.8"/>
<use href="#x" x="735.2" y="644.8"/>
<use href="#x" x="755" y="644.8"/>
<use href="#x" x="774.8" y="644.8"/>
<use href="#x" x="794.6" y="644.8"/>
<use href="#x" x="814.4" y="644.8"/>
<use href="#x" x="834.2" y="644.8"/>
<use href="#x" x="854" y="644.8"/>
<use href="#x" x="873.8" y="644.8"/>
<use href="#x" x="893.6" y="644.8"/>
<use href="#x" x="913.4" y="644.8"/>
<use href="#x" x="933.2" y="644.8"/>
<use href="#x" x="953" y="644.8"/>
<use href="#x" x="972.8" y="644.8"/>
<use href="#x" x="992.6" y="644.8"/>
<use href="#x" x="1012.4" y="644.8"/>
<use href="#x" x="1032.2" y="644.8"/>
<rect x="656" y="664.6" width="15.84" height="15.84" fill="#ffffff"/>
<rect x="675.8" y="664.6" width="15.84" height="15.84" fill="#ffffff"/>
<rect x="695.6" y="664.6" width="15.84" height="15.84" fill="#ffffff"/>
<rect x="715.4" y="664.6" width="15.84" height="15.84" fill="#ffffff"/>
<rect x="735.2" y="664.6" width="15.84" height="15.84" fill="#ffffff"/>
<rect x="755" y="664.6" width="15.84" height="15.84" fill="#ffffff"/>
<rect x="774.8" y="664.6" width="15.84" height="15.84" fill="#ffffff"/>
<rect x="794.6" y="664.6" width="15.84" height="15.84" fill="#ffffff"/>
<rect x="814.4" y="664.6" width="15.84" height="15.84" fill="#ffffff"/>
<rect x="834.2" y="664.6" width="15.84" height="15.84" fill="#ffffff"/>
<rect x="854" y="664.6" width="15.84" height="15.84" fill="#ffffff"/>
<rect x="873.8" y="664.6" width="15.84" height="15.84" fill="#ffffff"/>
<rect x="893.6" y="664.6" width="15.84" height="15.84" fill="#ffffff"/>
<rect x="913.4" y="664.6" width="15.84" height="15.84" fill="#ffffff"/>
<rect x="933.2" y="664.6" width="15.84" height="15.84" fill="#ffffff"/>
<rect x="953" y="664.6" width="15.84" height="15.84" fill="#ffffff"/>
<rect x="972.8" y="664.6" width="15.84" height="15.84" fill="#ffffff"/>
<rect x="992.6" y="664.6" width="15.84" height="15.84" fill="#ffffff"/>
<rect x="1012.4" y="664.6" width="15.84" height="15.84" fill="#ffffff"/>
<rect x="1032.2" y="664.6" width="15.84" height="15.84" fill="#ffffff"/>
<rect x="656" y="684.4" width="15.84" height="15.84" fill="#fff1e8"/>
<rect x="675.8" y="684.4" width="15.84" height="15.84" fill="#fff1e8"/>
<rect x="695.6" y="684.4" width="15.84" height="15.84" fill="#fff1e8"/>
<rect x="715.4" y="684.4" width="15.84" height="15.84" fill="#fff1e8"/>
<rect x="735.2" y="684.4" width="15.84" height="15.84" fill="#fff1e8"/>
<rect x="755" y="684.4" width="15.84" height="15.84" fill="#fff1e8"/>
<rect x="774.8" y="684.4" width="15.84" height="15.84" fill="#fff1e8"/>
<rect x="794.6" y="684.4" width="15.84" height="15.84" fill="#fff1e8"/>
<rect x="814.4" y="684.4" width="15.84" height="15.84" fill="#fff1e8"/>
<rect x="834.2" y="684.4" width="15.84" height="15.84" fill="#fff1e8"/>
<rect x="854" y="684.4" width="15.84" height="15.84" fill="#fff1e8"/>
<rect x="873.8" y="684.4" width="15.84" height="15.84" fill="#fff1e8"/>
<rect x="893.6" y="684.4" width="15.84" height="15.84" fill="#fff1e8"/>
<rect x="913.4" y="684.4" width="15.84" height="15.84" fill="#fff1e8"/>
<rect x="933.2" y="684.4" width="15.84" height="15.84" fill="#fff1e8"/>
<rect x="953" y="684.4" width="15.84" height="15.84" fill="#fff1e8"/>
<rect x="972.8" y="684.4" width="15.84" height="15.84" fill="#fff1e8"/>
<rect x="992.6" y="684.4" width="15.84" height="15.84" fill="#fff1e8"/>
<rect x="1012.4" y="684.4" width="15.84" height="15.84" fill="#fff1e8"/>
<rect x="1032.2" y="684.4" width="15.84" height="15.84" fill="#fff1e8"/>
<rect x="656" y="704.2" width="15.84" height="15.84" fill="#ffffff"/>
<rect x="675.8" y="704.2" width="15.84" height="15.84" fill="#ffffff"/>
<rect x="695.6" y="704.2" width="15.84" height="15.84" fill="#ffffff"/>
<rect x="715.4" y="704.2" width="15.84" height="15.84" fill="#ffffff"/>
<rect x="735.2" y="704.2" width="15.84" height="15.84" fill="#ffffff"/>
<rect x="755" y="704.2" width="15.84" height="15.84" fill="#ffffff"/>
<rect x="774.8" y="704.2" width="15.84" height="15.84" fill="#ffffff"/>
<rect x="794.6" y="704.2" width="15.84" height="15.84" fill="#ffffff"/>
<rect x="814.4" y="704.2" width="15.84" height="15.84" fill="#ffffff"/>
<rect x="834.2" y="704.2" width="15.84" height="15.84" fill="#ffffff"/>
<rect x="854" y="704.2" width="15.84" height="15.84" fill="#ffffff"/>
<rect x="873.8" y="704.2" width="15.84" height="15.84" fill="#ffffff"/>
<rect x="893.6" y="704.2" width="15.84" height="15.84" fill="#ffffff"/>
<rect x="913.4" y="704.2" width="15.84" height="15.84" fill="#ffffff"/>
<rect x="933.2" y="704.2" width="15.84" height="15.84" fill="#ffffff"/>
<rect x="953" y="704.2" width="15.84" height="15.84" fill="#ffffff"/>
<rect x="972.8" y="704.2" width="15.84" height="15.84" fill="#ffffff"/>
<rect x="992.6" y="704.2" width="15.84" height="15.84" fill="#ffffff"/>
<rect x="1012.4" y="704.2" width="15.84" height="15.84" fill="#ffffff"/>
<rect x="1032.2" y="704.2" width="15.84" height="15.84" fill="#ffffff"/>
<g font-family="'Liberation Sans', Arial, sans-serif" font-size="9.85" fill="#96b9b7">
<text transform="matrix(0.85 0 .002 1 657.8 313.95)">3</text>
<text transform="matrix(0.85 0 .002 1 677.6 283.95)">5</text>
<text transform="matrix(0.85 0 .002 1 677.6 293.95)">1</text>
<text transform="matrix(0.85 0 .002 1 677.6 303.95)">2</text>
<text transform="matrix(0.85 0 .002 1 677.6 313.95)">1</text>
<text transform="matrix(0.85 0 .002 1 697.4 273.95)">1</text>
<text transform="matrix(0.85 0 .002 1 697.4 283.95)">1</text>
<text transform="matrix(0.85 0 .002 1 697.4 293.95)">1</text>
<text transform="matrix(0.85 0 .002 1 697.4 303.95)">1</text>
<text transform="matrix(0.85 0 .002 1 697.4 313.95)">3</text>
<text transform="matrix(0.85 0 .002 1 717.2 283.95)">1</text>
<text transform="matrix(0.85 0 .002 1 717.2 293.95)">1</text>
<text transform="matrix(0.85 0 .002 1 717.2 303.95)">1</text>
<text transform="matrix(0.85 0 .002 1 717.2 313.95)">1</text>
<text transform="matrix(0.85 0 .002 1 737 293.95)">5</text>
<text transform="matrix(0.85 0 .002 1 737 303.95)">1</text>
<text transform="matrix(0.85 0 .002 1 737 313.95)">3</text>
<text transform="matrix(0.85 0 .002 1 756.8 263.95)">1</text>
<text transform="matrix(0.85 0 .002 1 756.8 273.95)">1</text>
<text transform="matrix(0.85 0 .002 1 756.8 283.95)">1</text>
<text transform="matrix(0.85 0 .002 1 756.8 293.95)">1</text>
<text transform="matrix(0.85 0 .002 1 756.8 303.95)">2</text>
<text transform="matrix(0.85 0 .002 1 756.8 313.95)">1</text>
<text transform="matrix(0.85 0 .002 1 776.6 263.95)">1</text>
<text transform="matrix(0.85 0 .002 1 776.6 273.95)">1</text>
<text transform="matrix(0.85 0 .002 1 776.6 283.95)">1</text>
<text transform="matrix(0.85 0 .002 1 776.6 293.95)">1</text>
<text transform="matrix(0.85 0 .002 1 776.6 303.95)">1</text>
<text transform="matrix(0.85 0 .002 1 776.6 313.95)">3</text>
<text transform="matrix(0.85 0 .002 1 796.4 283.95)">1</text>
<text transform="matrix(0.85 0 .002 1 796.4 293.95)">1</text>
<text transform="matrix(0.85 0 .002 1 796.4 303.95)">1</text>
<text transform="matrix(0.85 0 .002 1 796.4 313.95)">1</text>
<text transform="matrix(0.85 0 .002 1 816.2 283.95)">4</text>
<text transform="matrix(0.85 0 .002 1 816.2 293.95)">1</text>
<text transform="matrix(0.85 0 .002 1 816.2 303.95)">2</text>
<text transform="matrix(0.85 0 .002 1 816.2 313.95)">3</text>
<text transform="matrix(0.85 0 .002 1 836 293.95)">1</text>
<text transform="matrix(0.85 0 .002 1 836 303.95)">1</text>
<text transform="matrix(0.85 0 .002 1 836 313.95)">1</text>
<text transform="matrix(0.85 0 .002 1 855.8 283.95)">4</text>
<text transform="matrix(0.85 0 .002 1 855.8 293.95)">1</text>
<text transform="matrix(0.85 0 .002 1 855.8 303.95)">2</text>
<text transform="matrix(0.85 0 .002 1 855.8 313.95)">3</text>
<text transform="matrix(0.85 0 .002 1 875.6 283.95)">1</text>
<text transform="matrix(0.85 0 .002 1 875.6 293.95)">1</text>
<text transform="matrix(0.85 0 .002 1 875.6 303.95)">1</text>
<text transform="matrix(0.85 0 .002 1 875.6 313.95)">1</text>
<text transform="matrix(0.85 0 .002 1 895.4 273.95)">5</text>
<text transform="matrix(0.85 0 .002 1 895.4 283.95)">1</text>
<text transform="matrix(0.85 0 .002 1 895.4 293.95)">1</text>
<text transform="matrix(0.85 0 .002 1 895.4 303.95)">1</text>
<text transform="matrix(0.85 0 .002 1 895.4 313.95)">3</text>
<text transform="matrix(0.85 0 .002 1 915.2 263.95)">1</text>
<text transform="matrix(0.85 0 .002 1 915.2 273.95)">1</text>
<text transform="matrix(0.85 0 .002 1 915.2 283.95)">1</text>
<text transform="matrix(0.85 0 .002 1 915.2 293.95)">1</text>
<text transform="matrix(0.85 0 .002 1 915.2 303.95)">2</text>
<text transform="matrix(0.85 0 .002 1 915.2 313.95)">1</text>
<text transform="matrix(0.85 0 .002 1 935 283.95)">1</text>
<text transform="matrix(0.85 0 .002 1 935 293.95)">1</text>
<text transform="matrix(0.85 0 .002 1 935 303.95)">1</text>
<text transform="matrix(0.85 0 .002 1 935 313.95)">3</text>
<text transform="matrix(0.85 0 .002 1 954.8 293.95)">1</text>
<text transform="matrix(0.85 0 .002 1 954.8 303.95)">4</text>
<text transform="matrix(0.85 0 .002 1 954.8 313.95)">1</text>
<text transform="matrix(0.85 0 .002 1 974.6 283.95)">5</text>
<text transform="matrix(0.85 0 .002 1 974.6 293.95)">1</text>
<text transform="matrix(0.85 0 .002 1 974.6 303.95)">1</text>
<text transform="matrix(0.85 0 .002 1 974.6 313.95)">3</text>
<text transform="matrix(0.85 0 .002 1 994.4 283.95)">1</text>
<text transform="matrix(0.85 0 .002 1 994.4 293.95)">1</text>
<text transform="matrix(0.85 0 .002 1 994.4 303.95)">1</text>
<text transform="matrix(0.85 0 .002 1 994.4 313.95)">1</text>
<text transform="matrix(0.85 0 .002 1 1014.2 313.95)">3</text>
<text transform="matrix(0.85 0 .002 1 1034 313.95)">3</text>
<text transform="matrix(0.85 0 .002 1 639.9 335)" fill="#a6eaf7">0</text>
<text transform="matrix(0.85 0 .002 1 590.25 354.8)">1</text>
<text transform="matrix(0.85 0 .002 1 600.18 354.8)">3</text>
<text transform="matrix(0.85 0 .002 1 610.11 354.8)">1</text>
<text transform="matrix(0.85 0 .002 1 620.04 354.8)">1</text>
<text transform="matrix(0.85 0 .002 1 629.97 354.8)">3</text>
<text transform="matrix(0.85 0 .002 1 639.9 354.8)">1</text>
<text transform="matrix(0.85 0 .002 1 590.25 374.6)">1</text>
<text transform="matrix(0.85 0 .002 1 600.18 374.6)">1</text>
<text transform="matrix(0.85 0 .002 1 610.11 374.6)">1</text>
<text transform="matrix(0.85 0 .002 1 620.04 374.6)">1</text>
<text transform="matrix(0.85 0 .002 1 629.97 374.6)">1</text>
<text transform="matrix(0.85 0 .002 1 639.9 374.6)">1</text>
<text transform="matrix(0.85 0 .002 1 590.25 394.4)">1</text>
<text transform="matrix(0.85 0 .002 1 600.18 394.4)">2</text>
<text transform="matrix(0.85 0 .002 1 610.11 394.4)">1</text>
<text transform="matrix(0.85 0 .002 1 620.04 394.4)">1</text>
<text transform="matrix(0.85 0 .002 1 629.97 394.4)">2</text>
<text transform="matrix(0.85 0 .002 1 639.9 394.4)">1</text>
<text transform="matrix(0.85 0 .002 1 590.25 414.2)">1</text>
<text transform="matrix(0.85 0 .002 1 600.18 414.2)">1</text>
<text transform="matrix(0.85 0 .002 1 610.11 414.2)">1</text>
<text transform="matrix(0.85 0 .002 1 620.04 414.2)">1</text>
<text transform="matrix(0.85 0 .002 1 629.97 414.2)">1</text>
<text transform="matrix(0.85 0 .002 1 639.9 414.2)">1</text>
<text transform="matrix(0.85 0 .002 1 600.18 434)">2</text>
<text transform="matrix(0.85 0 .002 1 610.11 434)">3</text>
<text transform="matrix(0.85 0 .002 1 620.04 434)">1</text>
<text transform="matrix(0.85 0 .002 1 629.97 434)">3</text>
<text transform="matrix(0.85 0 .002 1 639.9 434)">2</text>
<text transform="matrix(0.85 0 .002 1 639.9 453.8)" fill="#a6eaf7">0</text>
<text transform="matrix(0.85 0 .002 1 639.9 473.6)" fill="#a6eaf7">0</text>
<text transform="matrix(0.85 0 .002 1 639.9 493.4)">17</text>
<text transform="matrix(0.85 0 .002 1 639.9 513.2)" fill="#a6eaf7">0</text>
<text transform="matrix(0.85 0 .002 1 639.9 533)" fill="#a6eaf7">0</text>
<text transform="matrix(0.85 0 .002 1 610.11 552.8)">2</text>
<text transform="matrix(0.85 0 .002 1 620.04 552.8)">2</text>
<text transform="matrix(0.85 0 .002 1 629.97 552.8)">2</text>
<text transform="matrix(0.85 0 .002 1 639.9 552.8)">1</text>
<text transform="matrix(0.85 0 .002 1 590.25 572.6)">1</text>
<text transform="matrix(0.85 0 .002 1 600.18 572.6)">1</text>
<text transform="matrix(0.85 0 .002 1 610.11 572.6)">1</text>
<text transform="matrix(0.85 0 .002 1 620.04 572.6)">1</text>
<text transform="matrix(0.85 0 .002 1 629.97 572.6)">1</text>
<text transform="matrix(0.85 0 .002 1 639.9 572.6)">1</text>
<text transform="matrix(0.85 0 .002 1 590.25 592.4)">1</text>
<text transform="matrix(0.85 0 .002 1 600.18 592.4)">1</text>
<text transform="matrix(0.85 0 .002 1 610.11 592.4)">1</text>
<text transform="matrix(0.85 0 .002 1 620.04 592.4)">1</text>
<text transform="matrix(0.85 0 .002 1 629.97 592.4)">1</text>
<text transform="matrix(0.85 0 .002 1 639.9 592.4)">1</text>
<text transform="matrix(0.85 0 .002 1 610.11 612.2)">2</text>
<text transform="matrix(0.85 0 .002 1 620.04 612.2)">2</text>
<text transform="matrix(0.85 0 .002 1 629.97 612.2)">2</text>
<text transform="matrix(0.85 0 .002 1 639.9 612.2)">3</text>
<text transform="matrix(0.85 0 .002 1 639.9 632)" fill="#a6eaf7">0</text>
<text transform="matrix(0.85 0 .002 1 639.9 651.8)" fill="#a6eaf7">0</text>
<text transform="matrix(0.85 0 .002 1 639.9 671.6)">20</text>
<text transform="matrix(0.85 0 .002 1 550.53 691.4)">1</text>
<text transform="matrix(0.85 0 .002 1 560.46 691.4)">1</text>
<text transform="matrix(0.85 0 .002 1 570.39 691.4)">1</text>
<text transform="matrix(0.85 0 .002 1 580.32 691.4)">1</text>
<text transform="matrix(0.85 0 .002 1 590.25 691.4)">1</text>
<text transform="matrix(0.85 0 .002 1 600.18 691.4)">1</text>
<text transform="matrix(0.85 0 .002 1 610.11 691.4)">1</text>
<text transform="matrix(0.85 0 .002 1 620.04 691.4)">1</text>
<text transform="matrix(0.85 0 .002 1 629.97 691.4)">1</text>
<text transform="matrix(0.85 0 .002 1 639.9 691.4)">2</text>
<text transform="matrix(0.85 0 .002 1 550.53 711.2)">1</text>
<text transform="matrix(0.85 0 .002 1 560.46 711.2)">1</text>
<text transform="matrix(0.85 0 .002 1 570.39 711.2)">1</text>
<text transform="matrix(0.85 0 .002 1 580.32 711.2)">1</text>
<text transform="matrix(0.85 0 .002 1 590.25 711.2)">1</text>
<text transform="matrix(0.85 0 .002 1 600.18 711.2)">1</text>
<text transform="matrix(0.85 0 .002 1 610.11 711.2)">1</text>
<text transform="matrix(0.85 0 .002 1 620.04 711.2)">1</text>
<text transform="matrix(0.85 0 .002 1 629.97 711.2)">1</text>
<text transform="matrix(0.85 0 .002 1 639.9 711.2)">2</text>
</g>
<rect x="1128" y="80" width="124" height="124" fill="#ffeeee"/>
<rect x="1130" y="82" width="120" height="120" fill="#dedede"/>
<path fill="#787878" d="M1130 82h8v8h-8zM1138 82h8v8h-8zM1232 82h8v8h-8zM1240 82h10v8h-10zM1130 90h8v8h-8zM1138 90h8v8h-8zM1146 90h8v8h-8zM1224 90h8v8h-8zM1232 90h8v8h-8zM1240 90h10v8h-10zM1138 98h8v8h-8zM1146 98h8v8h-8zM1154 98h7v8h-7zM1217 98h7v8h-7zM1224 98h8v8h-8zM1232 98h8v8h-8zM1146 106h8v7h-8zM1154 106h7v7h-7zM1161 106h8v7h-8zM1209 106h8v7h-8zM1217 106h7v7h-7zM1224 106h8v7h-8zM1154 113h7v8h-7zM1161 113h8v8h-8zM1169 113h8v8h-8zM1201 113h8v8h-8zM1209 113h8v8h-8zM1217 113h7v8h-7zM1161 121h8v8h-8zM1169 121h8v8h-8zM1177 121h8v8h-8zM1193 121h8v8h-8zM1201 121h8v8h-8zM1209 121h8v8h-8zM1169 129h8v8h-8zM1177 129h8v8h-8zM1185 129h8v8h-8zM1193 129h8v8h-8zM1201 129h8v8h-8zM1177 137h8v8h-8zM1185 137h8v8h-8zM1193 137h8v8h-8zM1169 145h8v8h-8zM1177 145h8v8h-8zM1185 145h8v8h-8zM1193 145h8v8h-8zM1201 145h8v8h-8zM1161 153h8v8h-8zM1169 153h8v8h-8zM1177 153h8v8h-8zM1193 153h8v8h-8zM1201 153h8v8h-8zM1209 153h8v8h-8zM1154 161h7v8h-7zM1161 161h8v8h-8zM1169 161h8v8h-8zM1201 161h8v8h-8zM1209 161h8v8h-8zM1217 161h7v8h-7zM1146 169h8v7h-8zM1154 169h7v7h-7zM1161 169h8v7h-8zM1209 169h8v7h-8zM1217 169h7v7h-7zM1224 169h8v7h-8zM1138 176h8v8h-8zM1146 176h8v8h-8zM1154 176h7v8h-7zM1217 176h7v8h-7zM1224 176h8v8h-8zM1232 176h8v8h-8zM1130 184h8v8h-8zM1138 184h8v8h-8zM1146 184h8v8h-8zM1224 184h8v8h-8zM1232 184h8v8h-8zM1240 184h10v8h-10zM1130 192h8v10h-8zM1138 192h8v10h-8zM1232 192h8v10h-8zM1240 192h10v10h-10z"/>
</svg>
</div>
</body>
</html>
